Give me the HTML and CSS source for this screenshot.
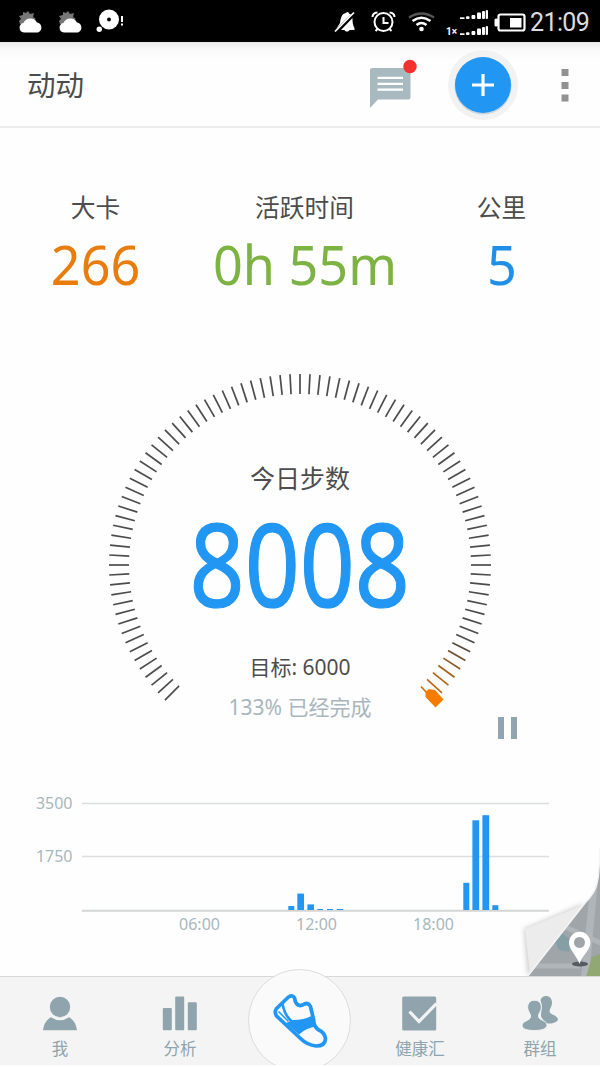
FILE: index.html
```html
<!DOCTYPE html>
<html lang="zh-CN">
<head>
    <meta charset="UTF-8">
    <meta name="viewport" content="width=device-width, initial-scale=1.0">
    <title>动动</title>
    <link rel="stylesheet" href="styles.css">
</head>
<body>
    <div class="app">
        <div class="status-bar">
            <svg class="status-left" width="130" height="42" viewBox="0 0 130 42">
                <g id="weather">
                    <path d="M28 11l2 3 4-1-1 4 3 2-3 2 0 4-13-1-1-3 2-2-2-3 4-1 0-3 3 1z" fill="#777"/>
                    <path d="M24 32.500a4.800 4.800 0 0 1-.5-9.500 7.500 7.500 0 0 1 13.500-.5 5.200 5.200 0 0 1 1 10z" fill="#fff"/>
                </g>
                <use href="#weather" x="40"/>
                <circle cx="109" cy="19.500" r="10" fill="#fff"/>
                <circle cx="109" cy="19.500" r="2" fill="#000"/>
                <circle cx="99.300" cy="29.300" r="2.700" fill="#fff"/>
                <path d="M121 16h2v6h-2zM121 23.500h2v2h-2z" fill="#fff"/>
            </svg>
            <svg class="status-right" width="200" height="42" viewBox="330 0 200 42">
                <path d="M336 29l4-6c1-8 3-9.500 6-10 1-2 3-1 3 .5l2 1zM341 30l11.500-12c0 5 .5 7 2 10v2h-5c-1 2-4 2-5 0z" fill="#fff"/>
                <path d="M335 31.500L354 12.500" stroke="#fff" stroke-width="1.700"/>
                <g fill="none" stroke="#fff" stroke-width="2">
                    <circle cx="383.500" cy="22" r="9"/>
                    <path d="M383.500 17v6h5M372.500 17q0-4 5-4.500M394.500 17q0-4-5-4.500M377.500 29l-2 2M389.500 29l2 2"/>
                </g>
                <g fill="none" stroke="#fff" stroke-width="2.600">
                    <path d="M409 17.500q12.500-8 25 0" stroke="#555"/>
                    <path d="M412.500 21q9-6.500 18 0M416.500 25q5-4 10 0"/>
                </g>
                <circle cx="421.500" cy="29" r="2.300" fill="#fff"/>
                <g id="signal" fill="#fff">
                    <rect x="460" y="17.300" width="4.500" height="1.700"/>
                    <rect x="466" y="16.200" width="3.500" height="2.800" rx="1"/>
                    <rect x="471.500" y="15" width="3.800" height="4" rx="1"/>
                    <rect x="477" y="12.500" width="4" height="6.500" rx="1"/>
                    <rect x="482" y="11" width="3" height="8" rx="1"/>
                    <rect x="485.700" y="10" width="2.300" height="9" rx="1"/>
                </g>
                <use href="#signal" y="16"/>
                <text x="446" y="35" class="signal-type">1×</text>
                <rect x="498.500" y="14.500" width="26" height="16" rx="2" fill="none" stroke="#fff" stroke-width="2.200"/>
                <rect x="494.500" y="18.500" width="3.500" height="8" rx="1.500" fill="#fff"/>
                <rect x="510" y="18" width="11.500" height="9.500" fill="#fff"/>
            </svg>
            <span class="clock">21:09</span>
        </div>

        <div class="header">
            <h1>动动</h1>
            <svg class="header-icons" width="240" height="84" viewBox="360 42 240 84">
                <path d="M372 68h36.500a2 2 0 0 1 2 2v27.500a2 2 0 0 1-2 2H378l-8 8.500V70a2 2 0 0 1 2-2z" fill="#a9b9c0"/>
                <path d="M377.500 77.800h25.500M377.500 83.800h25.500M377.500 89.600h25.500" stroke="#fff" stroke-width="2.200"/>
                <circle cx="410" cy="66.500" r="6.700" fill="#f4312f"/>
                <circle cx="483" cy="85" r="35" fill="#f2f2f2"/>
                <circle cx="483" cy="86" r="28.500" fill="#c9d5df"/>
                <circle cx="483" cy="85" r="28" fill="#2196f3"/>
                <path d="M472 85h22M483 74v22" stroke="#fff" stroke-width="3.200"/>
                <path d="M561.500 69h7v7h-7zM561.500 82h7v7h-7zM561.500 94.500h7v7h-7z" fill="#919191"/>
            </svg>
        </div>

        <div class="stats">
            <div class="stat calories">
                <span class="label">大卡</span>
                <span class="value"><b>266</b></span>
            </div>
            <div class="stat active">
                <span class="label">活跃时间</span>
                <span class="value"><b>0h 55m</b></span>
            </div>
            <div class="stat distance">
                <span class="label">公里</span>
                <span class="value"><b>5</b></span>
            </div>
        </div>

        <div class="dial">
            <svg class="ticks" width="400" height="400" viewBox="-200 -200 400 400">
                <g id="ticks"></g>
                <path d="M121 121.500l5.500 6" stroke="#c96a10" stroke-width="1.600"/>
                <path d="M125.500 132v-5l3.500-3 6 1 8.500 9.500-8 8z" fill="#f57c00"/>
            </svg>
            <div class="today">今日步数</div>
            <div class="steps"><b>8008</b></div>
            <div class="goal">目标: <b>6000</b></div>
            <div class="percent">133% 已经完成</div>
            <div class="pause"></div>
        </div>

        <svg class="chart" width="600" height="160" viewBox="0 780 600 160">
            <path d="M82 803.500h467M82 856.500h467" stroke="#dcdedf" stroke-width="1.300"/>
            <path d="M82 910.700h467" stroke="#d3d5d6" stroke-width="2"/>
            <g id="bars" fill="#2196f3"></g>
            <g class="axis">
                <text x="36" y="808.500" textLength="36.500">3500</text>
                <text x="36" y="862" textLength="36.500">1750</text>
                <text x="179" y="929.500" textLength="41">06:00</text>
                <text x="296" y="929.500" textLength="41">12:00</text>
                <text x="413" y="929.500" textLength="41">18:00</text>
            </g>
        </svg>

        <svg class="map-corner" width="90" height="137" viewBox="510 840 90 137">
            <defs>
                <clipPath id="corner"><path d="M600 848c-1 22-1 36-7 45q-4 6-8 10L527 977h73z"/></clipPath>
                <filter id="soft" x="-20%" y="-20%" width="140%" height="140%"><feGaussianBlur stdDeviation="2.500"/></filter>
            </defs>
            <path d="M585 903l-61 26 4 48z" fill="#ccc" filter="url(#soft)"/>
            <path d="M583 905l-58 24 5 45z" fill="#ececec"/>
            <g clip-path="url(#corner)">
                <path d="M510 840h90v137h-90z" fill="#a0a5aa"/>
                <path d="M591 880h7l-9 97h-8z" fill="#b0b5ba"/>
                <path d="M563 926l40 18M530 966h50" stroke="#b0b5ba" stroke-width="5"/>
                <path d="M554 940l8-7 9 7-2 12-10-2z" fill="#84a0a6"/>
                <path d="M592 957l8-3v23h-14z" fill="#91a873"/>
            </g>
            <path d="M600 848c-1 22-1 36-7 45q-4 6-8 10L527 977" fill="none" stroke="#f5f5f5" stroke-width="1.500"/>
            <ellipse cx="580" cy="964" rx="8" ry="2.500" fill="#555960"/>
            <path d="M579.500 964c-3-9-10.500-14-10.500-21.500a10.700 10.700 0 0 1 21.400 0c0 7.500-8 12.500-10.900 21.500zM579.500 937a5.500 5.500 0 1 0 .01 0z" fill="#fff" fill-rule="evenodd"/>
        </svg>

        <div class="nav">
            <div class="nav-item">
                <svg width="36" height="36" viewBox="0 0 36 36">
                    <circle cx="18" cy="11" r="10.200"/>
                    <path d="M1 34.300c1-7 4-11 8-13q9 6 18 0c4 2 7 6 8 13z"/>
                </svg>
                <span>我</span>
            </div>
            <div class="nav-item">
                <svg width="36" height="36" viewBox="0 0 36 36">
                    <rect x=".8" y="12" width="9" height="22.300" rx="1"/>
                    <rect x="13.200" y=".6" width="9" height="33.700" rx="1"/>
                    <rect x="25.800" y="6.200" width="9" height="28.100" rx="1"/>
                </svg>
                <span>分析</span>
            </div>
            <div class="nav-item"></div>
            <div class="nav-item">
                <svg width="36" height="36" viewBox="2 0 36 36">
                    <rect x="1" y=".5" width="34" height="34" rx="1.500" transform="translate(1.200 0)"/>
                    <path d="M9.500 15.500l9.500 10L36.500 7.500" fill="none" stroke="#f4f4f4" stroke-width="3.200"/>
                </svg>
                <span>健康汇</span>
            </div>
            <div class="nav-item">
                <svg width="36" height="36" viewBox="1 0 36 36">
                    <path d="M19.500 4c2-6 11-5.500 11.500 2 .3 4-2 6-2.500 9 .2 4 8 4 8.500 8.500-.5 3-7 5-12.500 3.500l-4-5.500c-1.500-3 .5-7 .3-11-.2-3-.8-4-1.300-6.500z"/>
                    <path d="M13.500 4.200c5 0 7.500 4 6.700 8.500-.5 3-3 5-2.700 8 .8 4 9 3.500 8.500 9-.7 3-5 4.800-12.500 4.800S1.500 33 1 30c0-5.500 8-5 8.500-9 .3-3-2-5-2.700-8-.8-5 1.700-8.800 6.700-8.800z" stroke="#f4f4f4" stroke-width="1"/>
                </svg>
                <span>群组</span>
            </div>
            <div class="home">
                <svg width="60" height="62" viewBox="0 0 60 62">
                    <path d="M6.500 20.500L18.500 9q4.500-2.500 6 1l1 4q2.500 5 7 3 4.500-3 7 0 1.500 1.500 1.500 4l2.500 10q0 7 4.500 10.500 7 3 7.500 9.500-.5 7-9.500 7-9-1-16-8L6.500 28q-2.500-4 0-7.500z" fill="#fafafa" stroke="#2196f3" stroke-width="3.700" stroke-linejoin="round"/>
                    <path d="M12.500 15.500q2 12 9.500 18" fill="none" stroke="#2196f3" stroke-width="2.600"/>
                    <path d="M16 35l7-3q13 0 20.500-5.500l3 12q-10 1-17.500 8z" fill="#2196f3"/>
                    <path d="M8.500 23.500l10 10" stroke="#2196f3" stroke-width="1.500"/>
                </svg>
            </div>
        </div>
    </div>

    <script>
        const svgNS = 'http://www.w3.org/2000/svg';

        // one tick every 3 degrees, the last ones fade into orange
        const fade = ['#594a3c', '#70502f', '#8c5a28', '#a3611e', '#b56518', '#bd6815'];
        const ticks = document.getElementById('ticks');
        for (let i = 0; i < 90; i++) {
            const line = document.createElementNS(svgNS, 'line');
            line.setAttribute('y1', -191);
            line.setAttribute('y2', -171);
            line.setAttribute('stroke', i > 83 ? fade[i - 84] : '#4c4c4c');
            line.setAttribute('transform', 'rotate(' + (-135 + i * 3) + ')');
            ticks.appendChild(line);
        }

        // x, top, width
        const bars = [
            [288.3, 906, 6], [297.3, 893.6, 6.7], [307.4, 904.4, 6.6],
            [317.3, 909, 5.7], [327, 909, 6], [336.8, 909, 6.5],
            [463.3, 882.8, 6], [472.4, 820.3, 6.8], [482.4, 815.2, 6.8], [492.3, 905.2, 6]
        ];
        bars.forEach(b => {
            const rect = document.createElementNS(svgNS, 'rect');
            rect.setAttribute('x', b[0]);
            rect.setAttribute('y', b[1]);
            rect.setAttribute('width', b[2]);
            rect.setAttribute('height', 910 - b[1]);
            document.getElementById('bars').appendChild(rect);
        });
    </script>
</body>
</html>
```

FILE: styles.css
```css
body {
    margin: 0;
    background: #fff;
    font-family: "Noto Sans", "Noto Sans CJK SC", sans-serif;
    color: #4c4c4c;
}
b {
    display: inline-block;
    font-weight: 400;
}
.app {
    position: relative;
    display: flex;
    flex-direction: column;
    width: 600px;
    height: 1067px;
    overflow: hidden;
    background: #fefefe;
}
.status-bar {
    display: flex;
    height: 42px;
    background: #000;
    color: #fff;
}
.status-right {
    margin-left: 200px;
}
.signal-type {
    font: bold 10px Roboto, sans-serif;
    fill: #fff;
}
.clock {
    font: 25px/46px Roboto, sans-serif;
    width: 62px;
    white-space: nowrap;
    letter-spacing: -0.6px;
    color: #ddd;
}
.header {
    display: flex;
    justify-content: space-between;
    height: 84px;
    border-bottom: 2px solid #ececec;
    background: linear-gradient(#e9e9e9, #fafafa 8px, #fefefe 18px);
}
.header h1 {
    margin: 0 0 0 27px;
    font-size: 28.5px;
    line-height: 87px;
    font-weight: 400;
}
.stats {
    display: flex;
    height: 157px;
    padding-top: 62px;
    box-sizing: border-box;
}
.stat {
    display: flex;
    flex-direction: column;
    align-items: center;
    white-space: nowrap;
}
.calories {
    width: 191px;
}
.active {
    width: 227px;
}
.distance {
    width: 167px;
}
.label {
    font-size: 24.7px;
    line-height: 36px;
}
.value {
    height: 60px;
    font-size: 55.5px;
    line-height: 75px;
}
.value b {
    transform: scaleX(0.94);
}
.calories .value {
    color: #e87d0d;
}
.active .value {
    color: #7cb342;
}
.distance .value {
    color: #228fe6;
}
.dial {
    position: relative;
    display: flex;
    flex-direction: column;
    align-items: center;
    height: 495px;
    white-space: nowrap;
}
.ticks {
    position: absolute;
    left: 100px;
    top: 80px;
    stroke-width: 1.7;
}
.today {
    margin-top: 175px;
    font-size: 25px;
    line-height: 36px;
}
.steps {
    height: 136px;
    font-size: 116px;
    line-height: 133px;
    color: #2196f3;
}
.steps b {
    transform: scaleX(0.83);
    -webkit-text-stroke: 1.2px #2196f3;
}
.goal {
    margin-top: 20px;
    font-size: 21px;
    line-height: 30px;
}
.percent {
    margin-top: 10px;
    font-size: 21px;
    line-height: 30px;
    color: #a9b7bd;
}
.pause {
    position: absolute;
    left: 498px;
    top: 432px;
    width: 7px;
    height: 22px;
    border: solid #92a5ae;
    border-width: 0 6px;
}
.chart {
    display: block;
    flex: none;
}
.axis {
    font-size: 16px;
    fill: #a9b7bd;
}
.map-corner {
    position: absolute;
    left: 510px;
    top: 840px;
}
.nav {
    position: absolute;
    left: 0;
    top: 976px;
    display: flex;
    width: 600px;
    height: 89px;
    box-sizing: border-box;
    border-top: 1px solid #d8d8d8;
    background: #f4f4f4;
    clip-path: inset(-10px 0 0 0);
}
.nav-item {
    display: flex;
    flex-direction: column;
    align-items: center;
    width: 120px;
    padding-top: 19px;
    box-sizing: border-box;
    font-size: 16.5px;
    line-height: 24px;
    color: #8fa4ad;
    fill: #8fa4ad;
}
.nav-item span {
    margin-top: 5px;
}
.home {
    position: absolute;
    left: 248px;
    top: -8px;
    display: flex;
    justify-content: center;
    width: 103px;
    height: 103px;
    padding-top: 18px;
    box-sizing: border-box;
    border: 1px solid #dcdcdc;
    border-radius: 50%;
    background: #fafafa;
}
```
